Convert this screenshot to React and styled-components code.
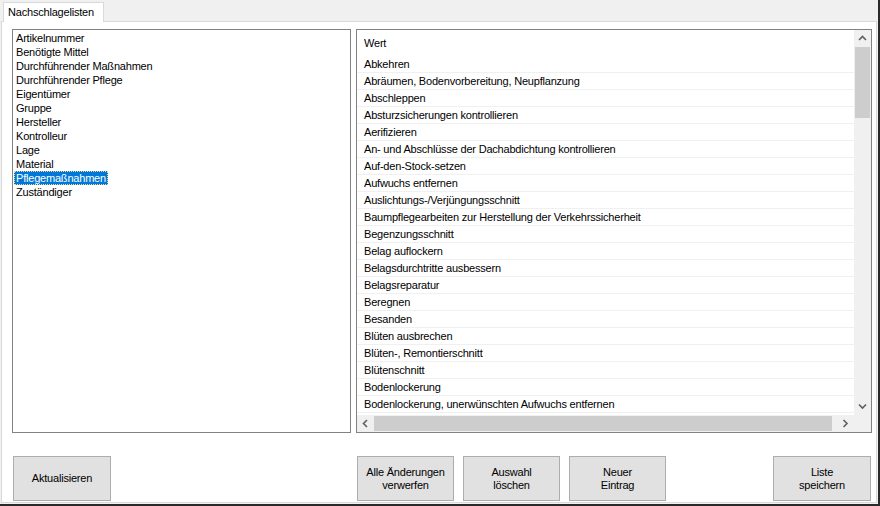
import React from 'react';
import styled, { createGlobalStyle } from 'styled-components';

const GlobalStyle = createGlobalStyle`
  html, body {
    margin: 0;
    padding: 0;
    background: #f0f0f0;
  }
  * {
    box-sizing: border-box;
  }
`;

const categories = [
  'Artikelnummer',
  'Benötigte Mittel',
  'Durchführender Maßnahmen',
  'Durchführender Pflege',
  'Eigentümer',
  'Gruppe',
  'Hersteller',
  'Kontrolleur',
  'Lage',
  'Material',
  'Pflegemaßnahmen',
  'Zuständiger',
];

const values = [
  'Abkehren',
  'Abräumen, Bodenvorbereitung, Neupflanzung',
  'Abschleppen',
  'Absturzsicherungen kontrollieren',
  'Aerifizieren',
  'An- und Abschlüsse der Dachabdichtung kontrollieren',
  'Auf-den-Stock-setzen',
  'Aufwuchs entfernen',
  'Auslichtungs-/Verjüngungsschnitt',
  'Baumpflegearbeiten zur Herstellung der Verkehrssicherheit',
  'Begenzungsschnitt',
  'Belag auflockern',
  'Belagsdurchtritte ausbessern',
  'Belagsreparatur',
  'Beregnen',
  'Besanden',
  'Blüten ausbrechen',
  'Blüten-, Remontierschnitt',
  'Blütenschnitt',
  'Bodenlockerung',
  'Bodenlockerung, unerwünschten Aufwuchs entfernen',
];

const Window = styled.div`
  width: 880px;
  height: 506px;
  display: flex;
  flex-direction: column;
  background: #f0f0f0;
  border-right: 2px solid #2a2a2a;
  border-bottom: 2px solid #2a2a2a;
  font-family: 'Liberation Sans', Arial, sans-serif;
  font-size: 11px;
  letter-spacing: -0.2px;
  color: #000;
`;

const TabStrip = styled.div`
  height: 21px;
  display: flex;
  align-items: flex-end;
  padding-left: 3px;
`;

const Tab = styled.div`
  height: 20px;
  width: 101px;
  padding: 3px 0 0 4px;
  background: #fff;
  border: 1px solid #d9d9d9;
  border-bottom: none;
  margin-bottom: -1px;
  position: relative;
  z-index: 1;
`;

const TabPage = styled.div`
  flex: 1;
  margin: 0 1px 1px 1px;
  background: #fff;
  border: 1px solid #d9d9d9;
  padding: 7px 4px 0 10px;
  display: flex;
  flex-direction: column;
`;

const ListsRow = styled.div`
  height: 404px;
  display: flex;
  gap: 5px;
`;

const CategoryList = styled.div`
  width: 339px;
  border: 1px solid #828282;
  padding: 1px 1px;
  display: flex;
  flex-direction: column;
  align-items: flex-start;
`;

const CategoryItem = styled.div`
  height: 14px;
  line-height: 14px;
  padding: 0 2px;
  white-space: nowrap;
  background: ${({ selected }) => (selected ? '#0078d7' : 'transparent')};
  color: ${({ selected }) => (selected ? '#fff' : '#000')};
  outline: ${({ selected }) => (selected ? '1px dotted #f5d88a' : 'none')};
  outline-offset: -1px;
`;

const Grid = styled.div`
  flex: 1;
  border: 1px solid #828282;
  display: grid;
  grid-template-columns: 1fr 17px;
  grid-template-rows: 1fr 17px;
  overflow: hidden;
`;

const GridBody = styled.div`
  overflow: hidden;
  display: flex;
  flex-direction: column;
`;

const HeaderCell = styled.div`
  height: 26px;
  flex-shrink: 0;
  padding-left: 7px;
  line-height: 27px;
`;

const Row = styled.div`
  height: 17px;
  flex-shrink: 0;
  line-height: 16px;
  padding-left: 7px;
  border-bottom: 1px solid #f0f0f0;
  white-space: nowrap;
`;

const VScroll = styled.div`
  background: #f0f0f0;
  display: flex;
  flex-direction: column;
`;

const HScroll = styled.div`
  background: #f0f0f0;
  display: flex;
`;

const Corner = styled.div`
  background: #f0f0f0;
`;

const ArrowBox = styled.div`
  width: 17px;
  height: 17px;
  flex-shrink: 0;
  display: flex;
  align-items: center;
  justify-content: center;
`;

const Track = styled.div`
  flex: 1;
  display: flex;
  flex-direction: ${({ vertical }) => (vertical ? 'column' : 'row')};
  padding: ${({ vertical }) => (vertical ? '0 1px' : '1px 0')};
`;

const Thumb = styled.div`
  background: #cdcdcd;
  ${({ vertical }) => (vertical ? 'height: 71px;' : 'flex: 1; margin-right: 5px;')}
`;

const ButtonBar = styled.div`
  margin-top: 23px;
  display: flex;
  padding-left: 1px;
  padding-right: 1px;
`;

const LeftGroup = styled.div`
  width: 344px;
  display: flex;
`;

const MiddleGroup = styled.div`
  display: flex;
  gap: 9px;
  flex: 1;
`;

const Button = styled.button`
  width: 98px;
  height: 45px;
  background: #e1e1e1;
  border: 1px solid #adadad;
  font-family: 'Liberation Sans', Arial, sans-serif;
  font-size: 11px;
  letter-spacing: -0.2px;
  line-height: 13px;
  color: #000;
  padding: 0 4px;
  text-align: center;
  cursor: pointer;
  margin-left: ${({ push }) => (push ? 'auto' : '0')};
  &:not(:last-child) {
    width: 97px;
  }
`;

const Chevron = ({ dir }) => {
  const paths = {
    up: 'M1 5 L4.5 1.5 L8 5',
    down: 'M1 1.5 L4.5 5 L8 1.5',
    left: 'M5 1 L1.5 4.5 L5 8',
    right: 'M1.5 1 L5 4.5 L1.5 8',
  };
  const horizontal = dir === 'left' || dir === 'right';
  return (
    <svg
      width={horizontal ? 7 : 9}
      height={horizontal ? 9 : 7}
      viewBox={horizontal ? '0 0 7 9' : '0 0 9 7'}
    >
      <path d={paths[dir]} fill="none" stroke="#606060" strokeWidth="1.6" />
    </svg>
  );
};

export default function App() {
  return (
    <>
      <GlobalStyle />
      <Window>
        <TabStrip>
          <Tab>Nachschlagelisten</Tab>
        </TabStrip>
        <TabPage>
          <ListsRow>
            <CategoryList>
              {categories.map((c) => (
                <CategoryItem key={c} selected={c === 'Pflegemaßnahmen'}>
                  {c}
                </CategoryItem>
              ))}
            </CategoryList>
            <Grid>
              <GridBody>
                <HeaderCell>Wert</HeaderCell>
                {values.map((v) => (
                  <Row key={v}>{v}</Row>
                ))}
              </GridBody>
              <VScroll>
                <ArrowBox>
                  <Chevron dir="up" />
                </ArrowBox>
                <Track vertical>
                  <Thumb vertical />
                </Track>
                <ArrowBox>
                  <Chevron dir="down" />
                </ArrowBox>
              </VScroll>
              <HScroll>
                <ArrowBox>
                  <Chevron dir="left" />
                </ArrowBox>
                <Track>
                  <Thumb />
                </Track>
                <ArrowBox>
                  <Chevron dir="right" />
                </ArrowBox>
              </HScroll>
              <Corner />
            </Grid>
          </ListsRow>
          <ButtonBar>
            <LeftGroup>
              <Button>Aktualisieren</Button>
            </LeftGroup>
            <MiddleGroup>
              <Button>
                Alle Änderungen
                <br />
                verwerfen
              </Button>
              <Button>
                Auswahl
                <br />
                löschen
              </Button>
              <Button>
                Neuer
                <br />
                Eintrag
              </Button>
              <Button push>
                Liste
                <br />
                speichern
              </Button>
            </MiddleGroup>
          </ButtonBar>
        </TabPage>
      </Window>
    </>
  );
}
